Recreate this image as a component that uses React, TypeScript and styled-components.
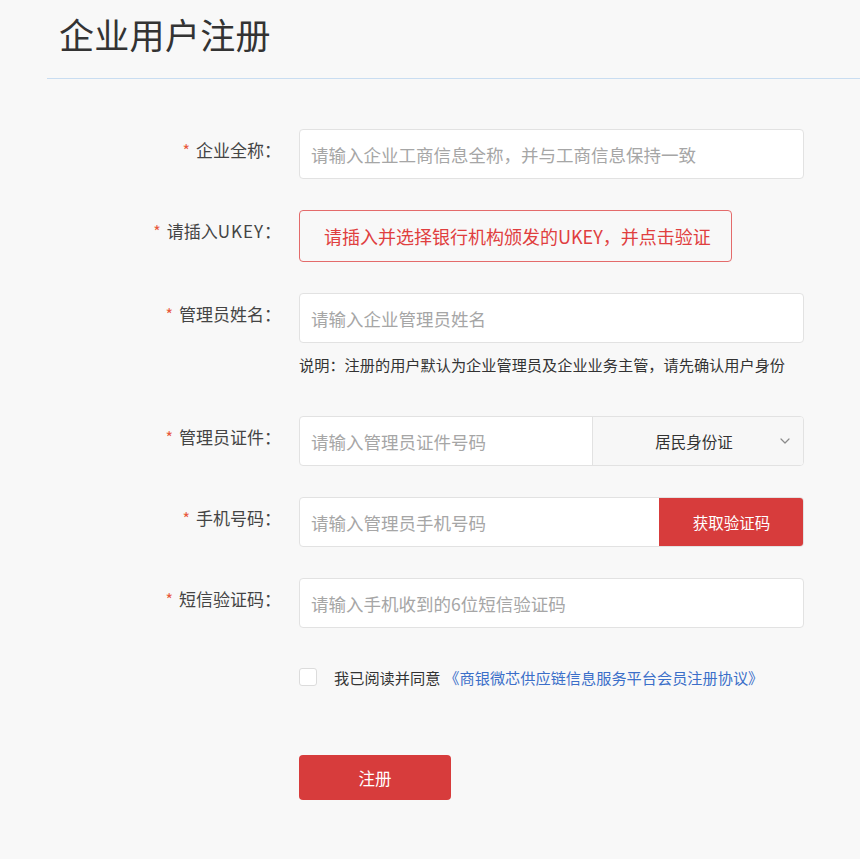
import React from "react";
import styled, { createGlobalStyle } from "styled-components";
import { ChevronDown } from "lucide-react";

const GlobalStyle = createGlobalStyle`
  html, body {
    margin: 0;
    padding: 0;
    background: #f8f8f8;
  }
  body {
    font-family: "Noto Sans CJK SC", "Noto Sans", sans-serif;
    color: #333;
  }
  * { box-sizing: border-box; }
`;

const Page = styled.div`
  width: 860px;
  min-height: 859px;
  background: #f8f8f8;
`;

const Header = styled.header`
  margin-left: 47px;
  height: 79px;
  border-bottom: 1px solid #c9ddf1;
  padding-left: 12px;
`;

const Title = styled.h1`
  margin: 0;
  font-size: 35px;
  font-weight: 400;
  line-height: 68px;
  color: #333;
  letter-spacing: 0.3px;
`;

const Form = styled.div`
  display: grid;
  grid-template-columns: 281px 505px;
  column-gap: 18px;
  row-gap: 31px;
  padding-top: 50px;
`;

const Label = styled.div`
  text-align: right;
  font-size: 17px;
  line-height: 42px;
  color: #444;
  white-space: nowrap;
`;

const Latin = styled.span`
  letter-spacing: 1px;
`;

const Star = styled.span`
  color: #e8593c;
  font-size: 16px;
  margin-right: 6px;
`;

const Field = styled.div`
  display: flex;
  flex-direction: column;
`;

const InputBox = styled.div`
  display: flex;
  height: 50px;
  background: #fff;
  border: 1px solid #e2e2e2;
  border-radius: 4px;
  overflow: hidden;
`;

const Input = styled.input`
  flex: 1;
  min-width: 0;
  border: none;
  outline: none;
  background: transparent;
  padding: 0 11px;
  font-family: inherit;
  font-size: 17.5px;
  color: #333;
  &::placeholder {
    color: #a6a6a6;
  }
`;

const UkeyBox = styled.div`
  display: inline-flex;
  align-self: flex-start;
  align-items: center;
  height: 52px;
  padding: 0 20px 0 24px;
  border: 1px solid #e46b6b;
  border-radius: 4px;
  color: #e03f3f;
  font-size: 18px;
  white-space: nowrap;
`;

const Help = styled.div`
  margin: 10px 0 10px;
  font-size: 15.2px;
  line-height: 22px;
  color: #333;
  white-space: nowrap;
`;

const SelectPart = styled.div`
  width: 211px;
  display: flex;
  align-items: center;
  background: #f7f7f7;
  border-left: 1px solid #e2e2e2;
  padding-right: 10px;
  color: #8a8a8a;
`;

const SelectText = styled.span`
  flex: 1;
  text-align: center;
  padding-left: 18px;
  font-size: 15.5px;
  color: #333;
`;

const CodeButton = styled.button`
  width: 145px;
  border: none;
  margin: -1px -1px -1px 0;
  background: #d73c3c;
  color: #fff;
  font-family: inherit;
  font-size: 15.5px;
  cursor: pointer;
  border-radius: 0 4px 4px 0;
`;

const AgreeRow = styled.div`
  grid-column: 2;
  display: flex;
  align-items: center;
  height: 36px;
  font-size: 15.2px;
  color: #333;
  white-space: nowrap;
`;

const Checkbox = styled.span`
  width: 18px;
  height: 18px;
  border: 1px solid #dcdcdc;
  border-radius: 3px;
  background: #fff;
  margin-right: 17px;
  flex-shrink: 0;
`;

const Link = styled.a`
  color: #3b6fc9;
  text-decoration: none;
  margin-left: 4px;
`;

const SubmitRow = styled.div`
  grid-column: 2;
  margin-top: 29px;
`;

const Submit = styled.button`
  width: 152px;
  height: 45px;
  border: none;
  border-radius: 4px;
  background: #d73c3c;
  color: #fff;
  font-family: inherit;
  font-size: 16.5px;
  cursor: pointer;
`;

const Req: React.FC<{ children: React.ReactNode }> = ({ children }) => (
  <Label>
    <Star>*</Star>
    {children}：
  </Label>
);

export default function App() {
  return (
    <Page>
      <GlobalStyle />
      <Header>
        <Title>企业用户注册</Title>
      </Header>
      <Form>
        <Req>企业全称</Req>
        <Field>
          <InputBox>
            <Input placeholder="请输入企业工商信息全称，并与工商信息保持一致" />
          </InputBox>
        </Field>

        <Req>
          请插入<Latin>UKEY</Latin>
        </Req>
        <Field>
          <UkeyBox>请插入并选择银行机构颁发的UKEY，并点击验证</UkeyBox>
        </Field>

        <Req>管理员姓名</Req>
        <Field>
          <InputBox>
            <Input placeholder="请输入企业管理员姓名" />
          </InputBox>
          <Help>说明：注册的用户默认为企业管理员及企业业务主管，请先确认用户身份</Help>
        </Field>

        <Req>管理员证件</Req>
        <Field>
          <InputBox>
            <Input placeholder="请输入管理员证件号码" />
            <SelectPart>
              <SelectText>居民身份证</SelectText>
              <ChevronDown size={16} strokeWidth={1.8} />
            </SelectPart>
          </InputBox>
        </Field>

        <Req>手机号码</Req>
        <Field>
          <InputBox>
            <Input placeholder="请输入管理员手机号码" />
            <CodeButton>获取验证码</CodeButton>
          </InputBox>
        </Field>

        <Req>短信验证码</Req>
        <Field>
          <InputBox>
            <Input placeholder="请输入手机收到的6位短信验证码" />
          </InputBox>
        </Field>

        <AgreeRow>
          <Checkbox />
          我已阅读并同意
          <Link href="#">《商银微芯供应链信息服务平台会员注册协议》</Link>
        </AgreeRow>

        <SubmitRow>
          <Submit>注册</Submit>
        </SubmitRow>
      </Form>
    </Page>
  );
}
